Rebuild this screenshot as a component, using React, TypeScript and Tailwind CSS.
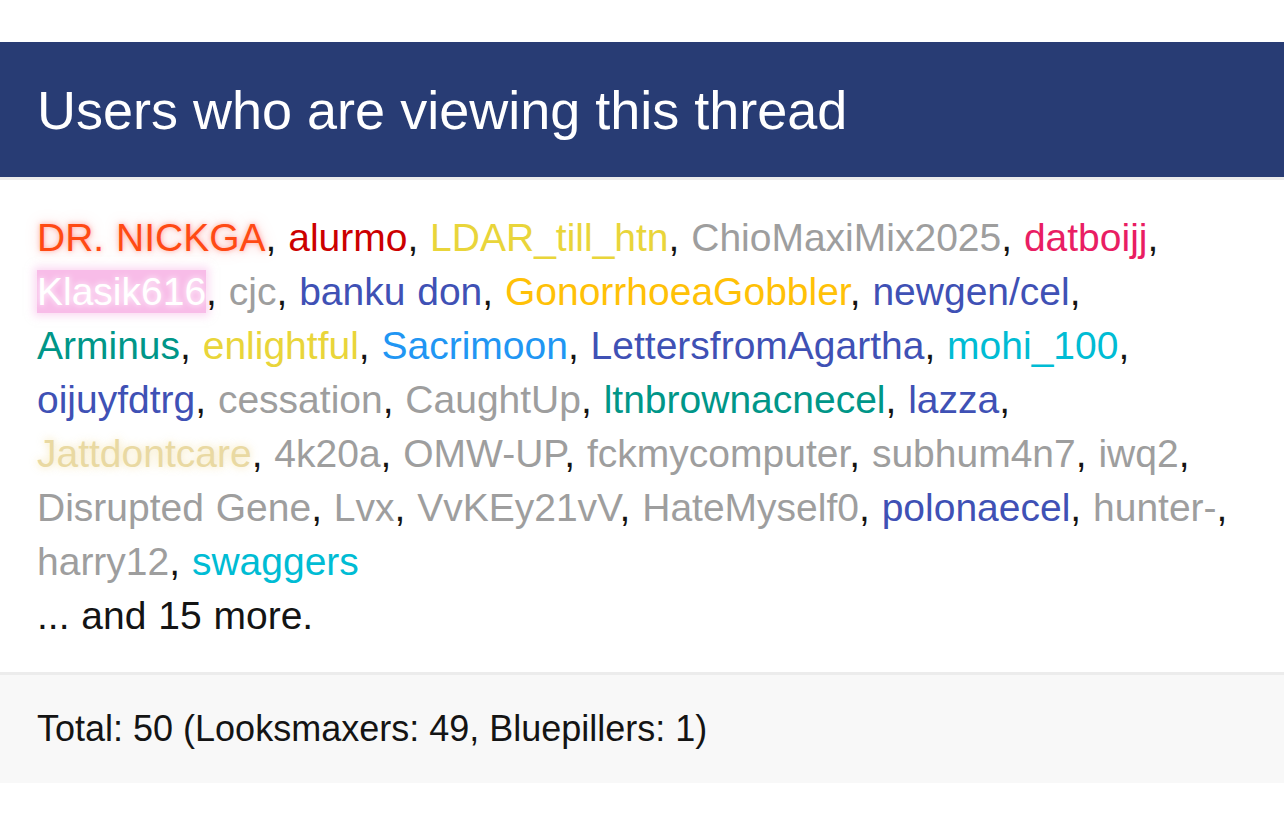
import React from "react";

type U = { n: string; c: string; fx?: "nick" | "klasik" | "jatt" };

const G = "text-[#9e9e9e]";
const B = "text-[#3f51b5]";

const lines: U[][] = [
  [
    { n: "DR. NICKGA", c: "", fx: "nick" },
    { n: "alurmo", c: "text-[#cc0000]" },
    { n: "LDAR_till_htn", c: "text-[#e9d53a]" },
    { n: "ChioMaxiMix2025", c: G },
    { n: "datboijj", c: "text-[#e91e63]" },
  ],
  [
    { n: "Klasik616", c: "", fx: "klasik" },
    { n: "cjc", c: G },
    { n: "banku don", c: B },
    { n: "GonorrhoeaGobbler", c: "text-[#ffc107]" },
    { n: "newgen/cel", c: B },
  ],
  [
    { n: "Arminus", c: "text-[#009688]" },
    { n: "enlightful", c: "text-[#e9d53a]" },
    { n: "Sacrimoon", c: "text-[#2196f3]" },
    { n: "LettersfromAgartha", c: B },
    { n: "mohi_100", c: "text-[#00bcd4]" },
  ],
  [
    { n: "oijuyfdtrg", c: B },
    { n: "cessation", c: G },
    { n: "CaughtUp", c: G },
    { n: "ltnbrownacnecel", c: "text-[#009688]" },
    { n: "lazza", c: B },
  ],
  [
    { n: "Jattdontcare", c: "", fx: "jatt" },
    { n: "4k20a", c: G },
    { n: "OMW-UP", c: G },
    { n: "fckmycomputer", c: G },
    { n: "subhum4n7", c: G },
    { n: "iwq2", c: G },
  ],
  [
    { n: "Disrupted Gene", c: G },
    { n: "Lvx", c: G },
    { n: "VvKEy21vV", c: G },
    { n: "HateMyself0", c: G },
    { n: "polonaecel", c: B },
    { n: "hunter-", c: G },
  ],
  [
    { n: "harry12", c: G },
    { n: "swaggers", c: "text-[#00bcd4]" },
  ],
];

function Name({ u }: { u: U }) {
  if (u.fx === "nick")
    return (
      <span className="text-[#ff4a14] [text-shadow:0_0_5px_rgba(255,90,70,0.5),0_0_14px_rgba(255,120,120,0.4)]">
        {u.n}
      </span>
    );
  if (u.fx === "klasik")
    return (
      <span className="text-white bg-[#f8bce8] [text-shadow:0_0_6px_rgba(255,255,255,0.95)] shadow-[0_0_8px_3px_rgba(248,180,230,0.5)]">
        {u.n}
      </span>
    );
  if (u.fx === "jatt")
    return (
      <span className="text-[#e9d9a2] [text-shadow:0_0_8px_rgba(240,215,140,0.7)]">
        {u.n}
      </span>
    );
  return <span className={u.c}>{u.n}</span>;
}

export default function App() {
  return (
    <div className="w-[1284px] h-[836px] bg-white pt-[42px] font-['Liberation_Sans',Arial,sans-serif]">
      <div className="bg-[#283c74] h-[135px] flex items-center px-[37px] border-b-[3px] border-[#ececec] box-content">
        <h3 className="text-white text-[54px] leading-none">Users who are viewing this thread</h3>
      </div>
      <div className="px-[37px] pt-[31px] pb-[29px] text-[39px] leading-[54px] text-[#141414] [word-spacing:1px]">
        {lines.map((line, li) => (
          <div key={li} className="whitespace-nowrap">
            {line.map((u, i) => (
              <React.Fragment key={u.n}>
                <Name u={u} />
                {li === lines.length - 1 && i === line.length - 1 ? "" : i < line.length - 1 ? ", " : ","}
              </React.Fragment>
            ))}
          </div>
        ))}
        <div>... and 15 more.</div>
      </div>
      <div className="border-t-[3px] border-[#ececec] bg-[#f8f8f8] h-[111px] box-border flex items-center px-[37px]">
        <span className="text-[36px] text-[#141414]">Total: 50 (Looksmaxers: 49, Bluepillers: 1)</span>
      </div>
    </div>
  );
}
